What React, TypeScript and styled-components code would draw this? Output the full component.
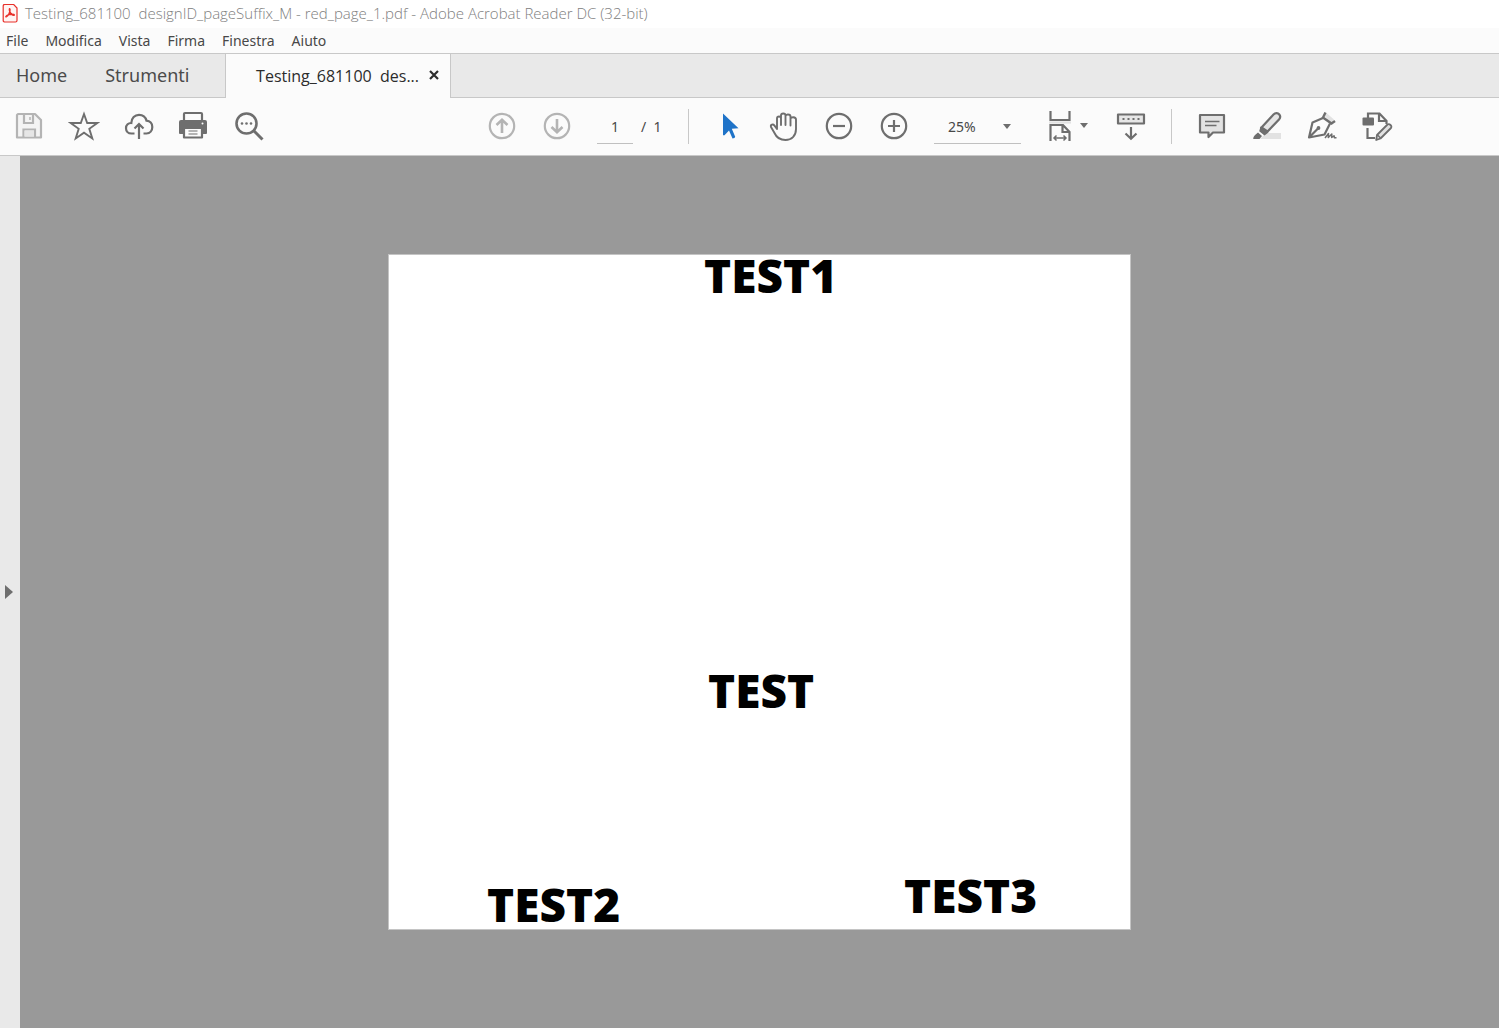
import React from "react";
import styled, { createGlobalStyle, css } from "styled-components";

const GlobalStyle = createGlobalStyle`
  *, *::before, *::after { box-sizing: border-box; }
  body { margin: 0; }
  body, button, input, select {
    font-family: "Noto Sans", "Open Sans", sans-serif;
  }
`;

const Window = styled.div`
  display: flex;
  flex-direction: column;
  min-height: 100vh;
  background: #fbfbfb;
  color: #484848;
`;

const TitleBar = styled.header`
  display: flex;
  align-items: center;
  gap: 6px;
  height: 28px;
  padding: 0 2px;
  background: #ffffff;
`;

const Title = styled.h1`
  margin: 0;
  font-family: "Open Sans", sans-serif;
  font-size: 15px;
  line-height: 18px;
  padding-bottom: 2px;
  font-weight: 300;
  color: #808080;
  white-space: pre;
`;

const MenuBar = styled.nav`
  display: flex;
  gap: 17px;
  height: 26px;
  padding: 0 6px;
  border-bottom: 1px solid #c8c8c8;
`;

const MenuItem = styled.button`
  padding: 0;
  border: 0;
  background: none;
  font-size: 14px;
  line-height: 24px;
  color: #484848;
`;

const TabStrip = styled.div`
  display: flex;
  height: 44px;
  background: #e9e9e9;
`;

const TabFill = styled.div`
  flex: 1;
  display: flex;
  border-bottom: 1px solid #c8c8c8;
`;

const HomeTabs = styled.div`
  display: flex;
  gap: 38px;
  width: 225px;
  padding: 0 16px 2px;
  border-bottom: 1px solid #c8c8c8;
`;

const Tab = styled.button`
  padding: 0;
  border: 0;
  background: none;
  font-size: 18px;
  line-height: 40px;
  color: #4b4b4b;
`;

const ActiveTab = styled.div`
  display: flex;
  align-items: center;
  justify-content: flex-end;
  gap: 10px;
  width: 226px;
  padding: 0 11px 2px 31px;
  border: solid #c8c8c8;
  border-width: 0 1px;
  background: #fbfbfb;
`;

const DocumentTab = styled(Tab)`
  padding-top: 2px;
  font-family: "Open Sans", sans-serif;
  font-size: 16px;
  color: #2c2c2c;
  white-space: pre;
`;

const CloseButton = styled.button`
  display: flex;
  padding: 0;
  border: 0;
  background: none;
`;

const Toolbar = styled.div`
  display: flex;
  align-items: center;
  height: 58px;
  padding: 0 1px 2px;
  border-bottom: 1px solid #c8c8c8;
`;

const ToolGroup = styled.div<{ $lead?: number }>`
  display: flex;
  align-items: center;
  margin-left: ${(p) => p.$lead ?? 0}px;
`;

const ToolButton = styled.button<{ $faded?: boolean }>`
  display: flex;
  align-items: center;
  justify-content: center;
  width: 55px;
  height: 44px;
  padding: 0;
  border: 0;
  background: none;
  color: ${(p) => (p.$faded ? "#b4b4b4" : "#6e6e6e")};
`;

const FitButton = styled(ToolButton)`
  gap: 9px;
  width: 70px;
`;

const Divider = styled.div<{ $before: number; $after: number }>`
  width: 1px;
  height: 35px;
  margin: 2px ${(p) => p.$after}px 0 ${(p) => p.$before}px;
  background: #c8c8c8;
`;

const underlined = css`
  height: 35px;
  border: 0;
  border-bottom: 1px solid #c0c0c0;
  border-radius: 0;
  background: none;
  font-size: 14px;
  color: #484848;
`;

const PageField = styled.input`
  ${underlined}
  width: 36px;
  margin: 2px 0 0 13px;
  padding: 0;
  text-align: center;
`;

const PageTotal = styled.span`
  width: 22px;
  margin: 2px 0 0 8px;
  font-size: 14px;
  line-height: 20px;
  white-space: pre;
`;

const ZoomBox = styled.label`
  display: flex;
  align-items: center;
  width: 87px;
  margin: 2px 12px 0 13px;
  padding-right: 10px;
  border-bottom: 1px solid #c0c0c0;
`;

const ZoomSelect = styled.select`
  ${underlined}
  flex: 1;
  height: 34px;
  padding: 0 0 0 14px;
  border: 0;
  appearance: none;
`;

const Workspace = styled.main`
  flex: 1;
  display: flex;
`;

const PaneHandle = styled.button`
  display: flex;
  align-items: center;
  width: 20px;
  padding: 0 5px;
  border: 0;
  background: #e9e9e9;
`;

const Desk = styled.section`
  flex: 1;
  display: flex;
  align-items: center;
  justify-content: center;
  background: #999999;
`;

const Sheet = styled.article`
  position: relative;
  width: 743px;
  height: 676px;
  border: 1px solid #c4c4c4;
  background: #ffffff;
`;

const Mark = styled.p<{ $x: number; $y: number }>`
  position: absolute;
  left: ${(p) => p.$x}px;
  top: ${(p) => p.$y}px;
  margin: 0;
  font-family: "Open Sans", sans-serif;
  font-size: 46px;
  line-height: 48px;
  font-weight: 800;
  color: #000000;
`;

const Icon = ({ children, size = 32 }: { children: React.ReactNode; size?: number }) => (
  <svg width={size} height={size} viewBox={`0 0 ${size} ${size}`} fill="none" stroke="currentColor" strokeWidth="2.200" aria-hidden="true">
    {children}
  </svg>
);

const Caret = () => (
  <svg width="8" height="5" viewBox="0 0 8 5" aria-hidden="true">
    <path d="M0 0H8L4 5Z" fill="#6e6e6e" />
  </svg>
);

const PdfLogo = () => (
  <svg width="17" height="20" viewBox="0 0 17 20" fill="none" aria-hidden="true">
    <path d="M3 .8H11.500L15 4.500V17Q15 18.500 13.500 18.500H3Q1.200 18.500 1.200 17V2.500Q1.200 .8 3 .8Z" transform="translate(0 -.5)" fill="#fff4f3" stroke="#e8302a" strokeWidth="1.200" />
    <path d="M4.200 12.800C6 12 8.500 8.500 8 5.200C7.500 4 6.800 5.500 8 8C9 10 10.500 11.800 12.300 11.200C13 10 7.500 9.800 4.800 11.500C3.800 12.200 3.600 13 4.200 12.800Z" stroke="#e8302a" strokeWidth="1.400" />
  </svg>
);

const SaveIcon = () => (
  <Icon>
    <path d="M5 4H22L28 10V27.500H4V5Z" fill="#f4f4f4" strokeLinejoin="round" />
    <path d="M11 4V13H20V4M10.500 27V19.500H22V27" />
    <path d="M17 7V10" strokeWidth="1.500" />
    <path d="M11.500 20.500H21V26.500H11.500Z" fill="#e6e6e6" stroke="none" />
  </Icon>
);

const StarIcon = () => (
  <Icon>
    <path d="M16 4L19.200 13H29.300L21.300 18.800L24.300 28.500L16 22.700L7.700 28.500L10.700 18.800L2.700 13H12.800Z" strokeWidth="1.900" />
  </Icon>
);

const CloudIcon = () => (
  <Icon>
    <path d="M11.500 23.500H8.500C5 23.500 3 21.200 3 18.200C3 15 5.500 12.800 8.300 13C8.500 8 11.800 4.800 16 4.800C20 4.800 22.600 7.200 23.500 10.700C27 10.900 29.300 13.500 29.300 17C29.300 20.700 27 23.500 23.500 23.500H20.500" />
    <path d="M16 29V14.500M11.500 18.500L16 14L20.500 18.500" />
  </Icon>
);

const PrintIcon = () => (
  <Icon>
    <path d="M6 12V4Q6 3 7 3H23Q24 3 24 4V12" />
    <path d="M3 10H27Q29 10 29 12V23Q29 24 28 24H2Q1 24 1 23V12Q1 10 3 10Z" fill="currentColor" stroke="none" />
    <path d="M6 18H24V27.500H6Z" fill="#fbfbfb" strokeLinejoin="round" />
    <path d="M10.500 21H19.500M10.500 24H19.500" strokeWidth="1.200" />
    <circle cx="24.500" cy="13.500" r="1" fill="#fff" stroke="none" />
  </Icon>
);

const SearchIcon = () => (
  <Icon>
    <circle cx="13.500" cy="13.500" r="10" strokeWidth="2.600" />
    <path d="M21 21L29.500 29.500" strokeWidth="3" />
    <g fill="currentColor" stroke="none">
      <circle cx="9" cy="13.500" r="1.300" />
      <circle cx="13.500" cy="13.500" r="1.300" />
      <circle cx="18" cy="13.500" r="1.300" />
    </g>
  </Icon>
);

const ArrowCircle = ({ down }: { down?: boolean }) => (
  <Icon>
    <circle cx="16" cy="16" r="12.200" />
    <path strokeWidth="2.600" d={down ? "M16 9V22M10.500 17L16 22.300L21.500 17" : "M16 23V10M10.500 15L16 9.700L21.500 15"} />
  </Icon>
);

const SignCircle = ({ plus }: { plus?: boolean }) => (
  <Icon>
    <circle cx="16" cy="16" r="12.200" />
    <path d={plus ? "M10 16H22M16 10V22" : "M10 16H22"} />
  </Icon>
);

const PointerIcon = () => (
  <Icon>
    <path d="M10 3.500L25.500 18.200L18.800 18.800L22.200 26.800Q22 28.500 19.500 28.500L16 20.500L11.500 25.200H10Z" fill="#1f73c8" stroke="none" />
  </Icon>
);

const HandIcon = () => (
  <Icon>
    <path strokeWidth="1.900" strokeLinecap="round" strokeLinejoin="round" d="M9 19V8.500C9 5.800 13 5.800 13 8.500V15M13 8V5.500C13 2.800 17.500 2.800 17.500 5.500V15M17.500 6.500C17.500 3.800 22.500 3.800 22.500 6.800V15.500M22.500 9C22.500 6.500 28 6.500 28 9.500V19C28 26 23.500 30 17.500 30C12 30 8.500 27.500 6.500 23L3 17C2.200 14.500 5 13.700 6.500 15.600L9 19" />
  </Icon>
);

const FitWidthIcon = () => (
  <svg width="22" height="32" viewBox="0 0 22 32" fill="none" stroke="currentColor" strokeWidth="2.200" aria-hidden="true">
    <path d="M1.500 1V10H20.500V1" />
    <path d="M0 12.500H22" stroke="#e2e2e2" />
    <path d="M1.500 31V15H14L20.500 22V31M13.500 15V22H20.500" />
    <path d="M5 28H17M7.500 25.500L5 28L7.500 30.500M14.500 25.500L17 28L14.500 30.500" strokeWidth="1.500" />
  </svg>
);

const ScrollIcon = () => (
  <Icon>
    <rect x="3" y="4.500" width="26" height="9" fill="#e6e6e6" strokeLinejoin="round" />
    <path d="M7.500 9H25" strokeDasharray="2 3" />
    <path d="M16 17V28.500M10.500 23.500L16 28.700L21.500 23.500" />
  </Icon>
);

const CommentIcon = () => (
  <Icon>
    <path d="M4 5H28V22.500H17L12.500 27V22.500H4Z" fill="#e2e2e2" strokeLinejoin="round" />
    <path d="M9 11.500H23.500M9 15.500H20.500" strokeWidth="1.300" />
  </Icon>
);

const HighlightIcon = () => (
  <Icon>
    <path d="M15 23H30V29H9Z" fill="#e2e2e2" stroke="none" />
    <path d="M10.500 17.500L22.500 4.500C24.500 2.500 27 3 28.300 4.500C29.500 6 29.300 8 28 9.500L16.500 21.500Z" fill="#e6e6e6" />
    <path d="M9.500 16.500L17.500 22.500L13.500 25.500L8.200 21.200ZM7 22.500L11 26L8.500 29H2.200Q2 27 4 25Z" fill="currentColor" stroke="none" />
  </Icon>
);

const SignIcon = () => (
  <Icon>
    <path d="M18.500 6L20.500 3L28 9.500L25 12.500Z" fill="#e2e2e2" stroke="none" />
    <path d="M19.500 2.500L17 7.500L25.500 13.500L29 11" strokeWidth="2.400" />
    <path d="M17 8L6.500 12.500L3 27.500L18.500 24.500L24 13.500M3.500 27L12 18.500" strokeLinejoin="round" />
    <circle cx="12.500" cy="18" r="1.900" fill="currentColor" stroke="none" />
    <path d="M19 28L22.500 23.500L22.300 27.500L25.800 24L25.700 27.500L28 25.800L28.500 27.800H30.500" strokeWidth="1.500" strokeLinejoin="round" />
  </Icon>
);

const EditPdfIcon = () => (
  <Icon>
    <path d="M7 8V3.500H18.500L25.500 11V14M18 3.500V11H25.500M6.500 18V28H14" />
    <rect x="1.500" y="7.500" width="11.500" height="8" rx="1" fill="currentColor" stroke="none" />
    <path d="M16 25L26.500 14.500Q28 13.500 29.500 15Q31 16.500 30 18L19.500 28.500L15.200 30Z" fill="#e2e2e2" strokeWidth="1.800" strokeLinejoin="round" />
    <path d="M16.500 25L19.500 28" strokeWidth="1.400" />
  </Icon>
);

const MENUS = ["File", "Modifica", "Vista", "Firma", "Finestra", "Aiuto"];

const MARKS = [
  { text: "TEST1", x: 315, y: -4 },
  { text: "TEST", x: 319, y: 411 },
  { text: "TEST2", x: 98, y: 625 },
  { text: "TEST3", x: 515, y: 616 },
];

export default function App() {
  return (
    <Window>
      <GlobalStyle />
      <TitleBar>
        <PdfLogo />
        <Title>{"Testing_681100  designID_pageSuffix_M - red_page_1.pdf - Adobe Acrobat Reader DC (32-bit)"}</Title>
      </TitleBar>
      <MenuBar>
        {MENUS.map((name) => (
          <MenuItem key={name}>{name}</MenuItem>
        ))}
      </MenuBar>
      <TabStrip>
        <HomeTabs>
          <Tab>Home</Tab>
          <Tab>Strumenti</Tab>
        </HomeTabs>
        <ActiveTab>
          <DocumentTab>{"Testing_681100  des..."}</DocumentTab>
          <CloseButton aria-label="Chiudi">
            <svg width="10" height="10" viewBox="0 0 10 10" stroke="#2c2c2c" strokeWidth="2.200" aria-hidden="true">
              <path d="M1 1L9 9M9 1L1 9" />
            </svg>
          </CloseButton>
        </ActiveTab>
        <TabFill />
      </TabStrip>
      <Toolbar>
        <ToolGroup>
          <ToolButton $faded aria-label="Salva"><SaveIcon /></ToolButton>
          <ToolButton aria-label="Preferiti"><StarIcon /></ToolButton>
          <ToolButton aria-label="Carica"><CloudIcon /></ToolButton>
          <ToolButton aria-label="Stampa"><PrintIcon /></ToolButton>
          <ToolButton aria-label="Trova"><SearchIcon /></ToolButton>
        </ToolGroup>
        <ToolGroup $lead={198}>
          <ToolButton $faded aria-label="Pagina precedente"><ArrowCircle /></ToolButton>
          <ToolButton $faded aria-label="Pagina successiva"><ArrowCircle down /></ToolButton>
          <PageField aria-label="Pagina" defaultValue="1" />
          <PageTotal>{"/  1"}</PageTotal>
          <Divider $before={25} $after={12} />
          <ToolButton aria-label="Selezione"><PointerIcon /></ToolButton>
          <ToolButton aria-label="Mano"><HandIcon /></ToolButton>
          <ToolButton aria-label="Riduci"><SignCircle /></ToolButton>
          <ToolButton aria-label="Ingrandisci"><SignCircle plus /></ToolButton>
          <ZoomBox>
            <ZoomSelect aria-label="Zoom" defaultValue="25%">
              <option>25%</option>
            </ZoomSelect>
            <Caret />
          </ZoomBox>
          <FitButton aria-label="Adatta larghezza">
            <FitWidthIcon />
            <Caret />
          </FitButton>
          <ToolButton aria-label="Scorrimento"><ScrollIcon /></ToolButton>
          <Divider $before={13} $after={12} />
          <ToolButton aria-label="Commento"><CommentIcon /></ToolButton>
          <ToolButton aria-label="Evidenzia"><HighlightIcon /></ToolButton>
          <ToolButton aria-label="Firma"><SignIcon /></ToolButton>
          <ToolButton aria-label="Modifica PDF"><EditPdfIcon /></ToolButton>
        </ToolGroup>
      </Toolbar>
      <Workspace>
        <PaneHandle aria-label="Apri riquadro">
          <svg width="8" height="14" viewBox="0 0 8 14" aria-hidden="true">
            <path d="M0 0L8 7L0 14Z" fill="#6e6e6e" />
          </svg>
        </PaneHandle>
        <Desk>
          <Sheet>
            {MARKS.map((m) => (
              <Mark key={m.text} $x={m.x} $y={m.y}>{m.text}</Mark>
            ))}
          </Sheet>
        </Desk>
      </Workspace>
    </Window>
  );
}
